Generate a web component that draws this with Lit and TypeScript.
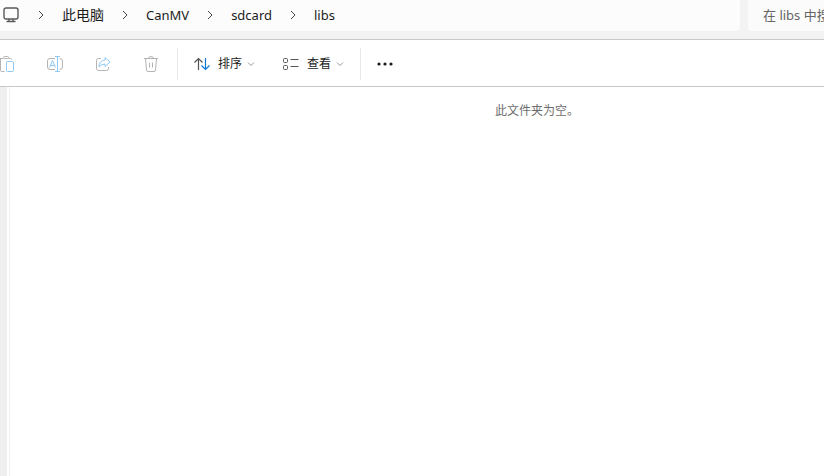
import { LitElement, html, css, svg } from "lit";
import { customElement } from "lit/decorators.js";

const chevronRight = html`<svg class="sep" width="6" height="10" viewBox="0 0 6 10" aria-hidden="true">
  <path d="M1 1l4 4-4 4" />
</svg>`;

const chevronDown = html`<svg class="down" width="8" height="6" viewBox="0 0 8 6" aria-hidden="true">
  <path d="M1 1.500l3 3 3-3" />
</svg>`;

const actions = [
  {
    label: "粘贴",
    art: svg`<path d="M0 2.500h3.500M.5 2.500v12q0 1 1 1h3M8.500 2.500h2q1 0 1 1M3.500 1.500q0-1 1-1h3q1 0 1 1t-1 1h-3q-1 0-1-1z" />
      <rect class="accent" x="6.500" y="5.500" width="7" height="10" rx="1" />`,
  },
  {
    label: "重命名",
    art: svg`<path d="M8 2.500H3q-2.500 0-2.500 2.500v6q0 2.500 2.500 2.500h5M12.500 2.500q3 0 3 2.500v6q0 2.500-3 2.500" />
      <path class="accent" d="M2.500 11.500l3-7 3 7M3.500 9.500h4M10.500 .5v15M8 .5h5M8 15.500h5" />`,
  },
  {
    label: "共享",
    art: svg`<path d="M6 2.500H3.500Q1.500 2.500 1.500 4.500v8q0 2 2 2h8q2 0 2-2V11" />
      <path class="accent" d="M10 1.500l5 4.500-5 4.500V8Q6 8 4 11q0-6.500 6-7z" />`,
  },
  {
    label: "删除",
    art: svg`<path d="M1 2.500h14M5.500 2.500q0-2 2.500-2t2.500 2M2.500 2.500l1 11.500q.2 1.500 1.500 1.500h6q1.300 0 1.500-1.500l1-11.500M6.500 6.500v5M9.500 6.500v5" />`,
  },
];

@customElement("app-root")
export class AppRoot extends LitElement {
  static styles = css`
    :host {
      display: flex;
      flex-direction: column;
      min-height: 100vh;
      background: #fff;
      color: #1b1b1b;
      font-family: "Noto Sans", "Noto Sans CJK SC", sans-serif;
      overflow: hidden;
    }
    * {
      box-sizing: border-box;
    }
    svg {
      flex: none;
      display: block;
      fill: none;
      stroke: currentColor;
    }
    button {
      display: flex;
      align-items: center;
      padding: 0;
      border: 0;
      background: none;
      color: inherit;
      font: inherit;
    }
    .top {
      display: flex;
      gap: 8px;
      height: 40px;
      padding-bottom: 8px;
      background: #f3f3f3;
      border-bottom: 1px solid #c8c8c8;
    }
    .address {
      flex: 1;
      display: flex;
      align-items: center;
      padding: 0 0 2px 3px;
      background: #fcfcfc;
      border-radius: 0 0 4px 0;
    }
    .pc {
      color: #5a5a5a;
      margin-right: 19px;
    }
    .crumbs {
      display: flex;
      align-items: center;
      margin: 0;
      padding: 0;
      list-style: none;
      font-size: 13px;
      line-height: 20px;
    }
    .crumbs li {
      display: flex;
      align-items: center;
    }
    .crumbs a {
      padding: 0 18px;
      color: inherit;
      text-decoration: none;
      white-space: nowrap;
    }
    .crumbs .han {
      font-size: 14px;
    }
    .sep {
      color: #444;
    }
    .search {
      width: 76px;
      padding: 0 0 2px 15px;
      border: 0;
      border-radius: 0 0 0 4px;
      background: #fbfbfb;
      font-family: inherit;
      font-size: 13px;
      outline: none;
    }
    .search::placeholder {
      color: #666;
      opacity: 1;
    }
    .tools {
      display: flex;
      align-items: center;
      height: 47px;
      padding-top: 2px;
      border-bottom: 1px solid #c8c8c8;
      font-size: 12px;
      line-height: 16px;
    }
    .actions {
      display: flex;
      gap: 32px;
      padding-right: 18px;
      color: #b4b4b4;
    }
    .actions button {
      width: 16px;
    }
    .actions button:first-child {
      width: 15px;
    }
    .accent {
      stroke: #8fc8f5;
    }
    .blue {
      stroke: #0f7ad6;
    }
    .menus {
      display: flex;
      gap: 27px;
      padding: 0 16px;
      height: 32px;
      border: solid #e8e8e8;
      border-width: 0 1px;
    }
    .menus svg {
      color: #555;
    }
    .menus span {
      margin: 0 5px 0 8px;
    }
    .menus .down {
      color: #999;
    }
    .more {
      padding: 0 16px;
    }
    .more svg {
      fill: #1b1b1b;
      stroke: none;
    }
    .body {
      flex: 1;
      display: flex;
    }
    .rail {
      width: 10px;
      border-left: 7px solid #efefef;
      border-right: 1px solid #f0f0f0;
    }
    .files {
      flex: 1;
      padding: 16px 0 0 240px;
    }
    .empty {
      margin: 0;
      text-align: center;
      color: #6d6d6d;
      font-size: 12px;
      line-height: 16px;
    }
  `;

  render() {
    const crumbs = ["此电脑", "CanMV", "sdcard", "libs"];
    return html`
      <header class="top">
        <nav class="address" aria-label="路径">
          <svg class="pc" width="16" height="16" viewBox="0 0 16 16" stroke-width="1.400" aria-hidden="true">
            <rect x="1" y="1" width="14" height="11" rx="2" />
            <path d="M6 12v2.500M10 12v2.500M3.500 14.500h9" />
          </svg>
          <ol class="crumbs">
            ${crumbs.map(
              (name, i) => html`<li>${chevronRight}<a class=${i === 0 ? "han" : ""} href="#">${name}</a></li>`
            )}
          </ol>
        </nav>
        <input class="search" type="text" aria-label="搜索" placeholder="在 libs 中搜索" />
      </header>
      <div class="tools" role="toolbar" aria-label="命令">
        <div class="actions">
          ${actions.map(
            (a) => html`<button disabled aria-label=${a.label}>
              <svg width="16" height="16" viewBox="0 0 16 16">${a.art}</svg>
            </button>`
          )}
        </div>
        <div class="menus">
          <button>
            <svg width="16" height="16" viewBox="0 0 16 16" stroke-width="1.200">
              <path d="M4.500 14V2.500M.5 6.500l4-4 4 4" />
              <path class="blue" d="M11.500 2v11.500M7.500 9.500l4 4 4-4" />
            </svg>
            <span>排序</span>${chevronDown}
          </button>
          <button>
            <svg width="17" height="16" viewBox="0 0 17 16">
              <rect x="1.500" y="2.500" width="4" height="4" rx="1" />
              <rect x="1.500" y="9.500" width="4" height="4" rx="1" />
              <path d="M8.500 3.500h8M8.500 10.500h8" />
            </svg>
            <span>查看</span>${chevronDown}
          </button>
        </div>
        <button class="more" aria-label="更多">
          <svg width="16" height="4" viewBox="0 0 16 4">
            <circle cx="2" cy="2" r="1.600" /><circle cx="8" cy="2" r="1.600" /><circle cx="14" cy="2" r="1.600" />
          </svg>
        </button>
      </div>
      <main class="body">
        <div class="rail"></div>
        <section class="files"><p class="empty">此文件夹为空。</p></section>
      </main>
    `;
  }
}
